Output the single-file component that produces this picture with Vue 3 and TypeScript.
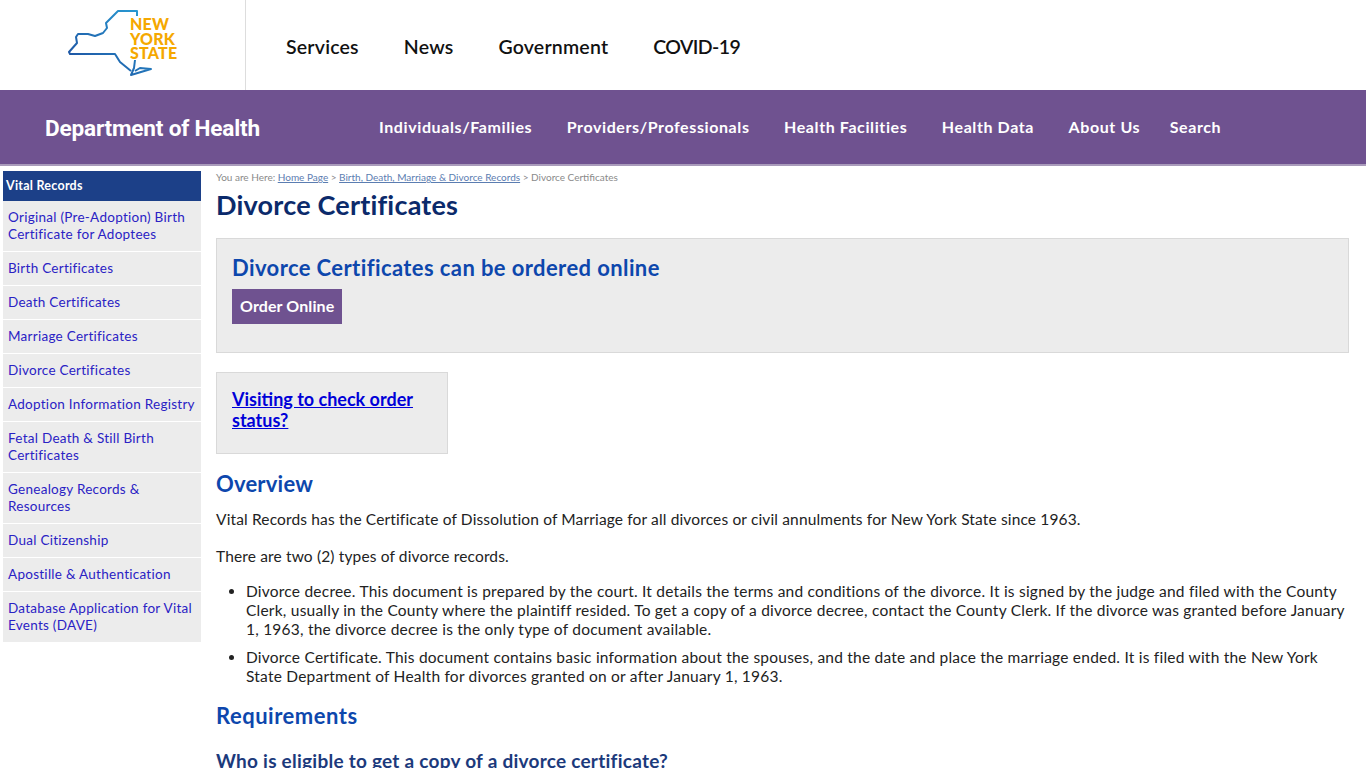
<script setup lang="ts">
const topLinks = ['Services', 'News', 'Government', 'COVID-19']
const bandLinks = [
  'Individuals/Families',
  'Providers/Professionals',
  'Health Facilities',
  'Health Data',
  'About Us',
  'Search',
]
const sideLinks = [
  'Original (Pre-Adoption) Birth Certificate for Adoptees',
  'Birth Certificates',
  'Death Certificates',
  'Marriage Certificates',
  'Divorce Certificates',
  'Adoption Information Registry',
  'Fetal Death & Still Birth Certificates',
  'Genealogy Records & Resources',
  'Dual Citizenship',
  'Apostille & Authentication',
  'Database Application for Vital Events (DAVE)',
]
</script>

<template>
  <div class="page">
    <header class="top">
      <div class="logo-cell">
        <svg class="state" width="80" height="70" viewBox="0 0 80 70" aria-hidden="true">
          <defs>
            <linearGradient id="ny" x1="1" y1="0" x2="0" y2="1">
              <stop offset="0" stop-color="#2a9fd6" />
              <stop offset="1" stop-color="#1c4a9c" />
            </linearGradient>
          </defs>
          <path
            d="M69 15 L69 10 L50 10 L44 16 L38 22 L39 27 L35 32 L27 35 L20 33 L10 33 L8 36 L9 42 L1 51 L2 53 L47 53 L52 61 L63 70 M67 59 L66 67 L63 74 L83 68 L72 67 L67 70"
            fill="none"
            stroke="url(#ny)"
            stroke-width="2"
            stroke-linejoin="round"
          />
        </svg>
        <div class="wordmark">NEW<br />YORK<br />STATE</div>
      </div>
      <nav class="top-nav">
        <a v-for="link in topLinks" :key="link">{{ link }}</a>
      </nav>
    </header>

    <div class="band">
      <div class="agency">Department of Health</div>
      <nav class="band-nav">
        <a v-for="link in bandLinks" :key="link">{{ link }}</a>
      </nav>
    </div>

    <div class="body">
      <aside class="side">
        <div class="side-title">Vital Records</div>
        <a v-for="link in sideLinks" :key="link" class="side-link">{{ link }}</a>
      </aside>

      <main class="main">
        <div class="crumbs">
          You are Here: <a>Home Page</a> &gt; <a>Birth, Death, Marriage &amp; Divorce Records</a> &gt; Divorce
          Certificates
        </div>
        <h1>Divorce Certificates</h1>

        <section class="panel order">
          <h2>Divorce Certificates can be ordered online</h2>
          <a class="btn">Order Online</a>
        </section>

        <section class="panel visit">
          <a>Visiting to check order status?</a>
        </section>

        <h3>Overview</h3>
        <p>Vital Records has the Certificate of Dissolution of Marriage for all divorces or civil annulments for New York State since 1963.</p>
        <p class="types">There are two (2) types of divorce records.</p>
        <ul>
          <li>Divorce decree. This document is prepared by the court. It details the terms and conditions of the divorce. It is signed by the judge and filed with the County Clerk, usually in the County where the plaintiff resided. To get a copy of a divorce decree, contact the County Clerk. If the divorce was granted before January 1, 1963, the divorce decree is the only type of document available.</li>
          <li>Divorce Certificate. This document contains basic information about the spouses, and the date and place the marriage ended. It is filed with the New York State Department of Health for divorces granted on or after January 1, 1963.</li>
        </ul>
        <h3 class="req">Requirements</h3>
        <h4>Who is eligible to get a copy of a divorce certificate?</h4>
      </main>
    </div>
  </div>
</template>

<style>
html,
body {
  margin: 0;
  background: #fff;
}
</style>

<style scoped>
.page {
  height: 768px;
  overflow: hidden;
  font-family: Lato, 'Open Sans', sans-serif;
  color: #222;
}
.top {
  display: flex;
  height: 90px;
  background: #fff;
}
.logo-cell {
  position: relative;
  width: 245px;
  height: 90px;
  border-right: 1px solid #ddd;
}
.state {
  position: absolute;
  left: 68px;
  top: 1px;
  overflow: visible;
}
.wordmark {
  position: absolute;
  left: 130px;
  top: 17px;
  font-size: 16px;
  line-height: 14.5px;
  font-weight: 900;
  letter-spacing: 0.2px;
  color: #f5a800;
}
.top-nav {
  display: flex;
  align-items: center;
  gap: 45px;
  padding: 2px 0 0 40px;
  font-size: 19.5px;
  font-weight: 600;
  letter-spacing: 0.2px;
  color: #111;
}
.top-nav a:last-child {
  letter-spacing: -0.6px;
}
.band {
  display: flex;
  align-items: center;
  height: 76px;
  background: #6f5290;
  color: #fff;
  border-bottom: 2px solid #a99bbb;
  box-sizing: border-box;
}
.agency {
  width: 379px;
  padding: 3px 0 0 45px;
  box-sizing: border-box;
  font-family: Roboto, sans-serif;
  font-size: 22.6px;
  font-weight: 700;
  letter-spacing: -0.2px;
}
.band-nav {
  display: flex;
  gap: 34.5px;
  padding-bottom: 2px;
  font-size: 16px;
  font-weight: 700;
  letter-spacing: 0.6px;
}
.band-nav a:last-child {
  margin-left: -5px;
}
.body {
  display: flex;
  padding: 5px 17px 0 3px;
}
.side {
  flex: none;
  width: 198px;
  font-size: 13.5px;
  line-height: 17px;
}
.side-title {
  height: 30px;
  line-height: 30px;
  padding-left: 3px;
  background: #1c4088;
  color: #fff;
  font-size: 12.5px;
  font-weight: 700;
  letter-spacing: 0.25px;
}
.side-link {
  display: block;
  padding: 8px 5px;
  background: #ececec;
  border-bottom: 1px solid #fff;
  color: #2a22c4;
  letter-spacing: 0.27px;
}
.main {
  flex: 1;
  min-width: 0;
  margin-left: 15px;
}
.crumbs {
  font-size: 10px;
  line-height: 13px;
  color: #8a8a8a;
}
.crumbs a {
  color: #5b7db1;
  text-decoration: underline;
}
h1 {
  margin: 5px 0 17px;
  font-size: 27px;
  line-height: 32px;
  font-weight: 700;
  letter-spacing: 0.2px;
  color: #0b2a6b;
}
.panel {
  box-sizing: border-box;
  background: #ececec;
  border: 1px solid #d9d9d9;
  padding: 15px;
}
.order {
  height: 115px;
}
h2 {
  margin: 0 0 7px;
  font-size: 22px;
  line-height: 28px;
  font-weight: 700;
  letter-spacing: 0.4px;
  color: #0d47ad;
}
.btn {
  display: inline-block;
  height: 35px;
  line-height: 34px;
  padding: 0 8px;
  background: #6f5290;
  color: #fff;
  font-size: 16px;
  font-weight: 700;
  letter-spacing: 0.1px;
}
.visit {
  width: 232px;
  height: 82px;
  margin-top: 19px;
  padding-top: 16px;
  font-size: 18px;
  line-height: 21px;
  font-weight: 700;
}
.visit a {
  color: #0000d8;
  text-decoration: underline;
}
h3 {
  margin: 17px 0 13px;
  font-size: 22px;
  line-height: 26px;
  font-weight: 700;
  letter-spacing: 0.2px;
  color: #0d47ad;
}
p {
  margin: 0;
  font-size: 15.5px;
  line-height: 19px;
  letter-spacing: 0.145px;
}
.types {
  margin-top: 18px;
}
ul {
  margin: 16px 0 0;
  padding-left: 30px;
  font-size: 15.5px;
  line-height: 19px;
  letter-spacing: 0.225px;
}
li {
  margin-bottom: 9px;
}
.req {
  margin-top: 17px;
  letter-spacing: 0.5px;
}
h4 {
  margin: 21px 0 0;
  font-size: 19px;
  line-height: 22px;
  font-weight: 700;
  letter-spacing: 0.25px;
  color: #1c3a7c;
}
</style>
